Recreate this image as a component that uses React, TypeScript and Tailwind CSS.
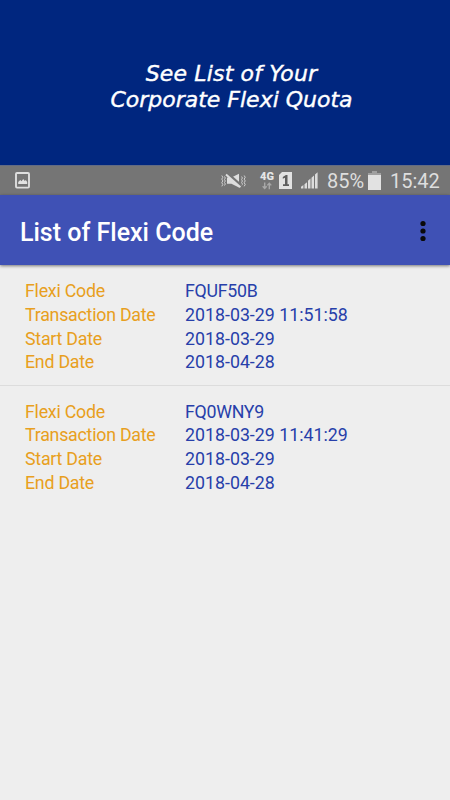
import React from 'react';

type FlexiCode = {
  code: string;
  transactionDate: string;
  startDate: string;
  endDate: string;
};

const codes: FlexiCode[] = [
  { code: 'FQUF50B', transactionDate: '2018-03-29 11:51:58', startDate: '2018-03-29', endDate: '2018-04-28' },
  { code: 'FQ0WNY9', transactionDate: '2018-03-29 11:41:29', startDate: '2018-03-29', endDate: '2018-04-28' },
];

function PictureIcon() {
  return (
    <svg className="w-4 h-[17px]" viewBox="0 0 16 17" fill="none">
      <rect x="1" y="1" width="13" height="14.6" rx="1" stroke="#dedede" strokeWidth="1.9" />
      <path d="M3.2 12V10l2-2 1.4 1.2L8.2 7l1.6 2 1-1 1.4 2v2z" fill="#e2e2e2" />
    </svg>
  );
}

function VibrateIcon() {
  return (
    <svg className="w-[25px] h-4" viewBox="0 0 25 16" fill="none" stroke="#d0d0d0">
      <path d="M.8 2.5l1 1.8-1 1.8 1 1.8-1 1.8 1 1.8-1 1.8M3.5 3.5l.8 1.5-.8 1.5.8 1.5-.8 1.5.8 1.5-.8 1.5M20.6 3.5l.8 1.5-.8 1.5.8 1.5-.8 1.5.8 1.5-.8 1.5M23.2 2.5l1 1.8-1 1.8 1 1.8-1 1.8 1 1.8-1 1.8" strokeWidth="1" />
      <path d="M6 4.6h4.4L18 .8v13.8l-7.6-3.8H6z" fill="#dedede" stroke="none" />
      <path d="M6.8 .8l13.4 12" stroke="#757575" strokeWidth="3" />
      <path d="M5 1.4l14.4 12.8" stroke="#dedede" strokeWidth="2" />
    </svg>
  );
}

function NetworkIcon() {
  return (
    <div className="w-[15px] h-[18px] flex flex-col items-center">
      <span className="text-[11px] leading-[10px] font-black text-[#e6e6e6]">4G</span>
      <svg className="w-[10px] h-[8px]" viewBox="0 0 10 8" fill="none" stroke="#a8a8a8" strokeWidth="1.4">
        <path d="M2.7 0.5v6M0.7 4.3l2 2.2 2-2.2M7.3 7.2v-6M5.3 3.4l2-2.2 2 2.2" />
      </svg>
    </div>
  );
}

function SimIcon() {
  return (
    <svg className="w-[13px] h-[17px]" viewBox="0 0 13 17">
      <path d="M3 0H13v17H0V3z" fill="#e2e2e2" />
      <path d="M3.8 4.9L6.9 3h1.6v9.2H10V14H4v-1.8h2V5.8L3.8 6.8z" fill="#5e5e5e" />
    </svg>
  );
}

function SignalIcon() {
  return (
    <svg className="w-[17px] h-[17px]" viewBox="0 0 17 17" fill="#dcdcdc">
      <path d="M0 14.8l2.4-1.8v3.5H0zM3.5 12.2l2.5-2v6.3H3.5zM7 8.7l2.5-2.2v10H7zM10.5 5.7l2.5-2.2v13h-2.5zM14 2.5L16.6.3v16.2H14z" />
    </svg>
  );
}

function BatteryIcon() {
  return (
    <svg className="w-[13px] h-[19px]" viewBox="0 0 13 19">
      <path d="M4 0h5v2h4v2H0V2h4z" fill="#a0a0a0" />
      <path d="M0 4h13v15H0z" fill="#e2e2e2" />
    </svg>
  );
}

function StatusBar() {
  return (
    <div className="h-[30px] bg-[#757575] border-t border-[#626b83] flex items-center pl-[15px] text-[#dedede]">
      <PictureIcon />
      <div className="ml-[189.5px]"><VibrateIcon /></div>
      <div className="ml-[14px]"><NetworkIcon /></div>
      <div className="ml-[4.5px]"><SimIcon /></div>
      <div className="ml-[9px]"><SignalIcon /></div>
      <span className="ml-[9px] w-[37px] text-[20px] leading-none whitespace-nowrap pt-px">85%</span>
      <div className="ml-[4px]"><BatteryIcon /></div>
      <span className="ml-[9px] text-[20px] leading-none pt-px">15:42</span>
    </div>
  );
}

function Row({ label, value }: { label: string; value: string }) {
  return (
    <div className="flex h-[23.8px] items-center">
      <span className="w-[160px] text-[#e89f20] tracking-[-0.24px]">{label}</span>
      <span className={/[A-Z]/.test(value) ? 'text-[#273faa] tracking-[-0.28px]' : 'text-[#273faa]'}>{value}</span>
    </div>
  );
}

export default function App() {
  return (
    <main className="w-[450px] h-[800px] bg-[#eeeeee] flex flex-col overflow-hidden font-[Roboto,sans-serif]">
      <div className="h-[165px] bg-[#00267f] pt-[61px] pl-[13px] text-center text-white italic text-[22px] leading-[26px] font-['DejaVu_Sans',sans-serif] [-webkit-text-stroke:0.4px_white]">
        <p className="tracking-[0.15px]">See List of Your</p>
        <p>Corporate Flexi Quota</p>
      </div>
      <StatusBar />
      <header className="relative h-[70px] bg-[#3f51b5] flex items-center justify-between pl-[20px] pr-[24.5px] shadow-[0_1px_3px_rgba(0,0,0,0.5)]">
        <h1 className="text-white font-medium text-[25px] pt-[5px]">List of Flexi Code</h1>
        <svg className="w-[6px] h-[22px] mt-[2px]" viewBox="0 0 6 22" fill="#0a0a0a">
          <circle cx="3" cy="3.5" r="2.6" />
          <circle cx="3" cy="11" r="2.6" />
          <circle cx="3" cy="18.5" r="2.6" />
        </svg>
      </header>
      <section className="text-[17.8px]">
        {codes.map((item) => (
          <div key={item.code} className="h-[120.7px] pl-[25px] pt-[14.4px] border-b border-[#dcdcdc] last:border-b-0">
            <Row label="Flexi Code" value={item.code} />
            <Row label="Transaction Date" value={item.transactionDate} />
            <Row label="Start Date" value={item.startDate} />
            <Row label="End Date" value={item.endDate} />
          </div>
        ))}
      </section>
    </main>
  );
}
